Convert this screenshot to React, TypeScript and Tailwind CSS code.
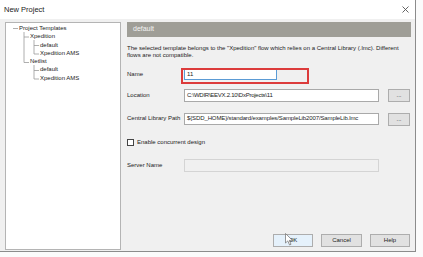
import React from "react";

const font = { fontFamily: '"Liberation Sans", Arial, sans-serif' };

const TreeItem = ({ label, indent }: { label: string; indent: string }) => (
  <div className={`h-[8.3px] leading-[8.3px] whitespace-nowrap ${indent}`}>{label}</div>
);

const SmallButton = ({ label, className = "" }: { label: string; className?: string }) => (
  <div
    className={`h-[13px] flex items-center justify-center bg-[#e1e1e1] border border-[#adadad] text-[6px] text-[#222] ${className}`}
  >
    {label}
  </div>
);

const App = () => {
  return (
    <div className="w-[423px] h-[257px] bg-[#fbfbfb] overflow-hidden text-[#1b1b1b]" style={font}>
      <div className="w-[416px] h-[252px] bg-[#f0f0f0] border-r border-b border-[#8c8c8c] flex flex-col">
        {/* title bar */}
        <div className="h-[19px] bg-white flex items-center justify-between pl-[4px] pr-[5px]">
          <span className="text-[7.5px] text-[#222]">New Project</span>
          <svg width="7" height="7" viewBox="0 0 7 7" className="mr-[1px]">
            <path d="M0.5 0.5 L6.5 6.5 M6.5 0.5 L0.5 6.5" stroke="#555" strokeWidth="0.9" />
          </svg>
        </div>

        <div className="flex-1 flex pl-[5px] pt-[3px] gap-[6px]">
          {/* template tree */}
          <div className="relative w-[116px] h-[228px] bg-white border border-[#b4b4b4] text-[6px] pt-[1px]">
            <svg className="absolute left-0 top-0" width="114" height="90">
              <g stroke="#9a9a9a" strokeWidth="0.8" fill="none">
                <path d="M7 5.5 H12" />
                <path d="M18 9 V39.5 M18 14 H23 M18 39.5 H23" />
                <path d="M28 17 V31 M28 22.5 H33 M28 31 H33" />
                <path d="M28 42 V56 M28 47.5 H33 M28 56 H33" />
              </g>
            </svg>
            <TreeItem label="Project Templates" indent="pl-[13px]" />
            <TreeItem label="Xpedition" indent="pl-[24px]" />
            <TreeItem label="default" indent="pl-[34px]" />
            <TreeItem label="Xpedition AMS" indent="pl-[34px]" />
            <TreeItem label="Netlist" indent="pl-[24px]" />
            <TreeItem label="default" indent="pl-[34px]" />
            <TreeItem label="Xpedition AMS" indent="pl-[34px]" />
          </div>

          {/* details */}
          <div className="w-[284px] flex flex-col text-[6px] pb-[4px]">
            <div className="h-[15px] bg-[#9f9e97] flex items-center pl-[6px] text-[7px] text-[#f4f4f4]">default</div>

            <p className="mt-[8px] leading-[7px] pr-[10px]">
              The selected template belongs to the "Xpedition" flow which relies on a Central Library (.lmc). Different
              flows are not compatible.
            </p>

            <div className="mt-[10px] flex items-center">
              <span className="w-[57px]">Name</span>
              <div className="relative">
                <div className="w-[93px] h-[11px] bg-white border border-[#5b9bd5] flex items-center pl-[2px]">11</div>
                <div className="absolute -left-[3px] -top-[1px] w-[128px] h-[16px] border-2 border-[#dc3b3b]" />
              </div>
            </div>

            <div className="mt-[9px] flex items-center">
              <span className="w-[57px]">Location</span>
              <div className="w-[195px] h-[13px] bg-white border border-[#a9a9a9] flex items-center pl-[2px] tracking-[-0.25px]">
                C:\WDIR\EEVX.2.10\DxProjects\11
              </div>
              <SmallButton label="..." className="ml-[9px] w-[22px] h-[12px]" />
            </div>

            <div className="mt-[9px] flex items-center">
              <span className="w-[57px]">Central Library Path</span>
              <div className="w-[195px] h-[12px] bg-white border border-[#a9a9a9] flex items-center pl-[2px] tracking-[-0.12px]">
                {"${SDD_HOME}/standard/examples/SampleLib2007/SampleLib.lmc"}
              </div>
              <SmallButton label="..." className="ml-[9px] w-[22px] h-[12px] mt-[2px]" />
            </div>

            <div className="mt-[12px] flex items-center gap-[3px]">
              <div className="w-[7px] h-[7px] bg-white border border-[#444]" />
              <span>Enable concurrent design</span>
            </div>

            <div className="mt-[12px] flex items-center">
              <span className="w-[57px]">Server Name</span>
              <div className="w-[195px] h-[13px] bg-[#f0f0f0] border border-[#d4d4d4]" />
            </div>

            <div className="flex-1" />

            <div className="flex justify-end gap-[8px] pr-[1px]">
              <div className="relative">
                <SmallButton label="OK" className="w-[40px] bg-[#e5f1fb] border-[#3d7bad]" />
                <svg className="absolute left-[12px] -top-[1px]" width="9" height="13" viewBox="0 0 9 13">
                  <path
                    d="M0.5 0.5 L0.5 10 L2.8 7.9 L4.6 12 L6 11.3 L4.3 7.4 L7.5 7.4 Z"
                    fill="#fff"
                    stroke="#6a6a6a"
                    strokeWidth="0.7"
                  />
                </svg>
              </div>
              <SmallButton label="Cancel" className="w-[41px]" />
              <SmallButton label="Help" className="w-[40px]" />
            </div>
          </div>
        </div>
      </div>
    </div>
  );
};

export default App;
